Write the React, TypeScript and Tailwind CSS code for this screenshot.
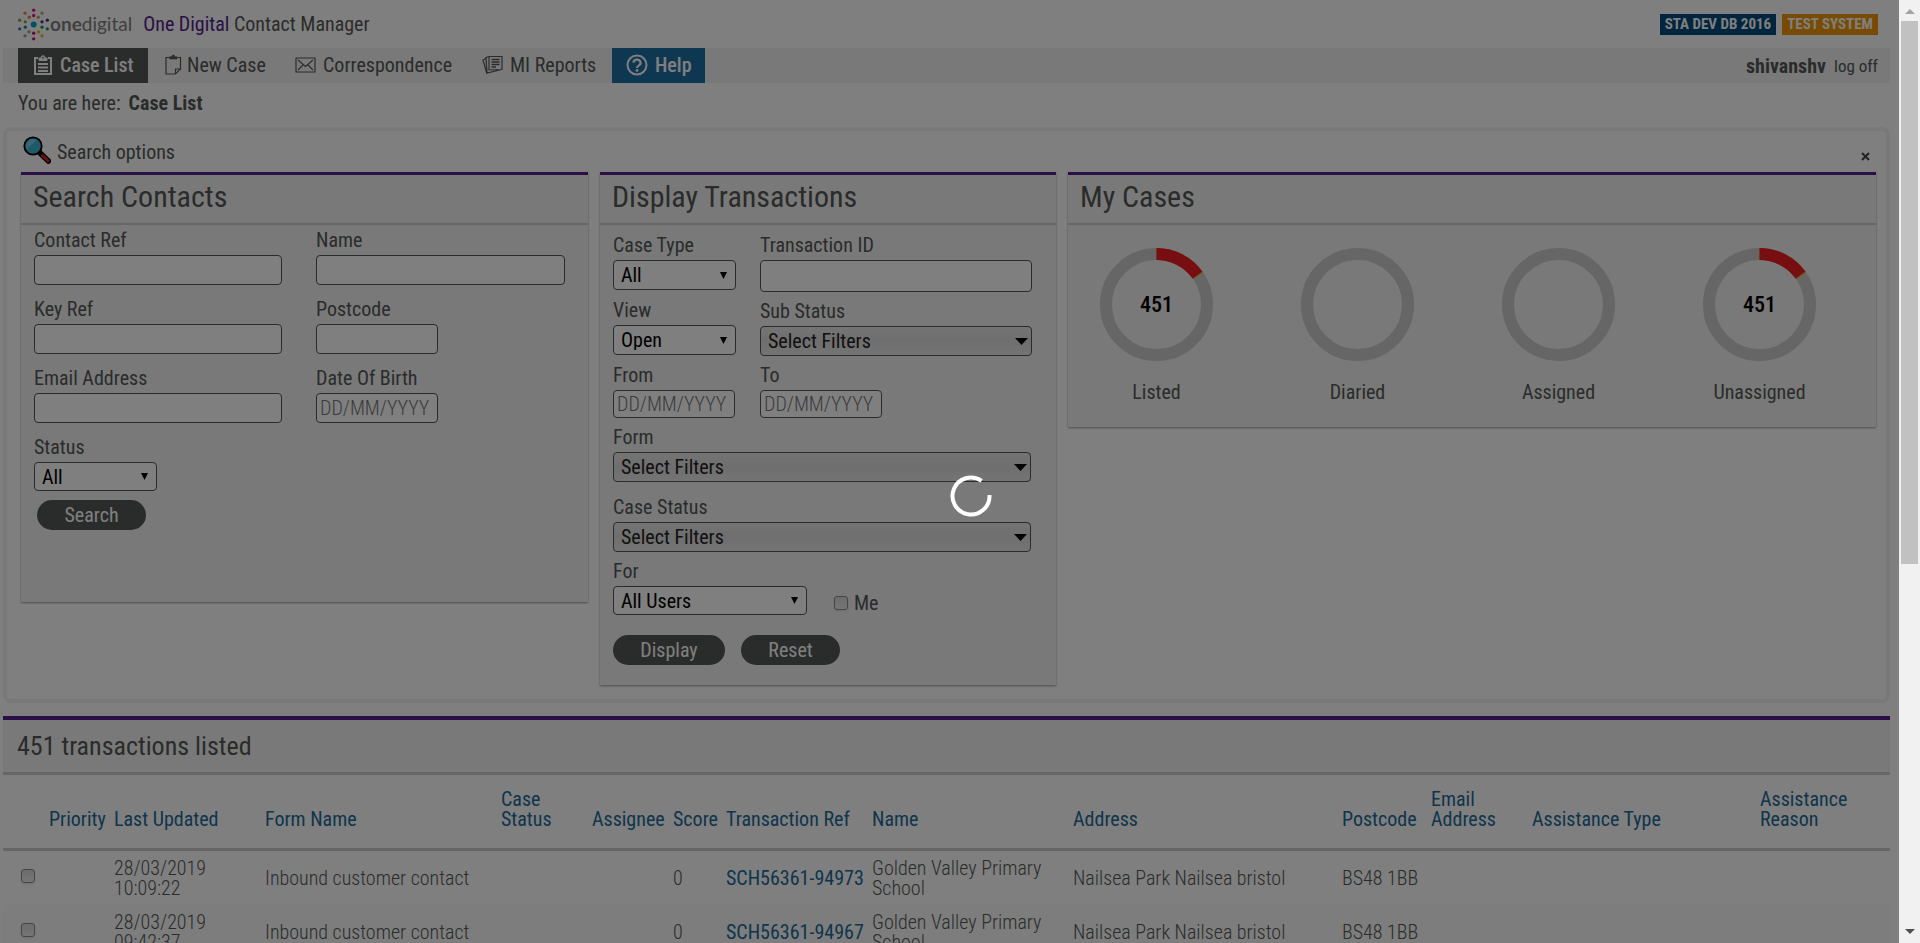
import React from 'react';

const LOGO_DOTS: [number, number, number, string][] = [
  [101, 75, 9, '#00a3c7'],
  [101, 32, 5, '#e5127d'], [101, 48, 5, '#e5127d'],
  [101, 101, 5, '#c4126b'], [101, 118, 5, '#c4126b'],
  [75, 41, 5, '#f0803c'], [88, 53, 5, '#f0803c'],
  [126, 41, 5, '#bfa67a'], [115, 53, 5, '#bfa67a'],
  [59, 62, 5, '#6cb33f'], [76, 67, 5, '#6cb33f'],
  [142, 62, 5, '#5b2d90'], [126, 67, 5, '#5b2d90'],
  [59, 88, 5, '#4a6fb5'], [76, 83, 5, '#4a6fb5'],
  [142, 88, 5, '#0f9d6b'], [126, 83, 5, '#0f9d6b'],
  [75, 109, 5, '#9a9a9a'], [87, 97, 5, '#9a9a9a'],
  [126, 109, 5, '#eeb11c'], [116, 97, 5, '#eeb11c'],
];

function Logo() {
  return (
    <a href="#" className="flex h-[33px] items-center font-['Lato',sans-serif] text-[19px] leading-5 text-[#808080]">
      <svg viewBox="54 26 96 98" className="h-[33px] w-8" aria-hidden="true">
        {LOGO_DOTS.map(([x, y, r, c], i) => <circle key={i} cx={x} cy={y} r={r} fill={c} />)}
      </svg>
      <span><b>one</b>digital</span>
    </a>
  );
}

function ClipboardIcon() {
  return (
    <svg viewBox="0 0 20 22" className="h-[22px] w-5" fill="none" stroke="currentColor" aria-hidden="true">
      <path d="M5 4H2v16h16V4h-3" strokeWidth="2" />
      <path d="M6 6.500V4h2a2 2.300 0 0 1 4 0h2v2.500z" fill="currentColor" strokeWidth="1" />
      <circle cx="10" cy="3.600" r=".9" fill="#545856" stroke="none" />
      <path d="M5 10h10M5 13.500h10M5 17h10" strokeWidth="2" />
    </svg>
  );
}

function NewCaseIcon() {
  return (
    <svg viewBox="0 0 17 22" className="h-[22px] w-[17px]" fill="none" stroke="currentColor" strokeWidth="1.200" aria-hidden="true">
      <path d="M4 3.500H1v16.500h9.500l5-5V3.500h-3M10.500 20v-5h5" />
      <path d="M4.500 5V2.800h2.300a1.500 1.800 0 0 1 3 0h2.300V5z" fill="currentColor" strokeWidth=".6" />
    </svg>
  );
}

function MailIcon() {
  return (
    <svg viewBox="0 0 21 16" className="h-4 w-[21px]" fill="none" stroke="currentColor" strokeWidth="1.200" aria-hidden="true">
      <path d="M1 1h19v14H1zM3 3l7.500 6.500L18 3M3 13l5-5M18 13l-5-5" />
    </svg>
  );
}

function ReportsIcon() {
  return (
    <svg viewBox="0 0 21 20" className="h-5 w-[21px]" fill="none" stroke="currentColor" strokeWidth="1.200" aria-hidden="true">
      <path d="M7 1.500h13v13L7 15zM7 1.500L4 2.500l1 15.500L20 14.500M4 3.500L1 5l4 14" />
      <path d="M9.500 4.500h8M9.500 7h8M9.500 9.500h8M9.500 12h4.500" strokeWidth="1.400" />
    </svg>
  );
}

function HelpIcon() {
  return (
    <svg viewBox="0 0 22 22" className="h-[22px] w-[22px]" fill="none" stroke="currentColor" strokeWidth="2" aria-hidden="true">
      <circle cx="11" cy="11" r="9.500" />
      <path d="M7.500 8.800a3.500 3.200 0 1 1 5.200 2.800c-1.200.7-1.700 1.200-1.700 2.400" strokeWidth="2.200" />
      <circle cx="11" cy="16.500" r="1.400" fill="currentColor" stroke="none" />
    </svg>
  );
}

function MagnifierIcon() {
  return (
    <svg viewBox="0 0 28 28" className="h-7 w-7" aria-hidden="true">
      <path d="M16 16l9.300 9" stroke="#000" strokeWidth="5.500" strokeLinecap="round" />
      <path d="M19.500 19.500l5.500 5.300" stroke="#d4212c" strokeWidth="3" strokeLinecap="round" />
      <circle cx="10" cy="10" r="8.700" fill="#3cb4d2" stroke="#000" strokeWidth="1.800" />
      <path d="M4 13.500L13.500 4a7 7 0 0 0-9.500 9.500z" fill="#6fd0e6" />
    </svg>
  );
}

const box = 'rounded border border-[#545856] bg-white';

function Field({ id, label, className = '', children }: { id: string; label: string; className?: string; children: React.ReactNode }) {
  return (
    <div className={className}>
      <label htmlFor={id} className="mb-[5px] block text-[20px] leading-5">{label}</label>
      {children}
    </div>
  );
}

function TextBox({ id, className, placeholder }: { id: string; className: string; placeholder?: string }) {
  return (
    <input
      id={id}
      type="text"
      placeholder={placeholder}
      className={`block px-[3px] text-[20px] font-light leading-5 text-black placeholder:text-[#757575] ${box} ${className}`}
    />
  );
}

function Select({ id, value, className }: { id: string; value: string; className: string }) {
  return (
    <div className={`grid items-center ${className}`}>
      <select id={id} className={`col-start-1 row-start-1 h-full w-full appearance-none pl-[7px] text-[20px] leading-5 text-black ${box}`}>
        <option>{value}</option>
      </select>
      <svg viewBox="0 0 7 7" className="pointer-events-none col-start-1 row-start-1 mr-[9px] h-[7px] w-[7px] justify-self-end" aria-hidden="true">
        <path d="M0 0h7L3.500 7z" />
      </svg>
    </div>
  );
}

function FilterSelect({ id }: { id: string }) {
  return (
    <div className="grid h-[30px] items-center">
      <select
        id={id}
        className="col-start-1 row-start-1 h-full w-full appearance-none rounded border border-[#545856] bg-linear-to-b from-[#e9e9e9] via-[#dedede] to-[#e9e9e9] pl-[7px] text-[20px] leading-5 text-[#222]"
      >
        <option>Select Filters</option>
      </select>
      <svg viewBox="0 0 13 7" className="pointer-events-none col-start-1 row-start-1 mr-1 h-[7px] w-[13px] justify-self-end" aria-hidden="true">
        <path d="M0 0h13L6.500 7z" />
      </svg>
    </div>
  );
}

const checkbox =
  'block h-3.5 w-3.5 shrink-0 appearance-none rounded-[3px] border border-[#8c8c8c] bg-linear-to-b from-[#d8d8d8] to-[#ececec] shadow-sm';

function Pill({ children, className }: { children: React.ReactNode; className: string }) {
  return (
    <button type="button" className={`h-[30px] rounded-[15px] bg-[#545856] text-[20px] leading-5 text-white ${className}`}>
      {children}
    </button>
  );
}

function Panel({ title, children }: { title: string; children: React.ReactNode }) {
  return (
    <section className="border-t-[3px] border-[#52228a] bg-[#f3f3f3] shadow-[0_1px_2px_rgba(0,0,0,0.4)]">
      <h2 className="h-[50px] border-b-2 border-[#cccccc] px-3 text-[30px] leading-[44px]">{title}</h2>
      {children}
    </section>
  );
}

function Ring({ label, value }: { label: string; value?: number }) {
  return (
    <div className="flex w-[113px] flex-col items-center">
      <svg viewBox="0 0 113 113" className="h-[113px] w-[113px]" role="img" aria-label={label}>
        <circle cx="56.500" cy="56.500" r="50.500" fill="none" stroke="#cccccc" strokeWidth="12" />
        {value !== undefined && (
          <>
            <path d="M56.500 6a50.500 50.500 0 0 1 41.600 21.900" fill="none" stroke="#f0aa28" strokeWidth="12" />
            <path d="M56.500 6a50.500 50.500 0 0 1 41 21" fill="none" stroke="#ee1c25" strokeWidth="12" />
            <text x="56.500" y="64" textAnchor="middle" fontSize="22" fontWeight="500">{value}</text>
          </>
        )}
      </svg>
      <span className="mt-[21px] text-[20px] leading-5">{label}</span>
    </div>
  );
}

const COLUMNS: { label: string; width: string }[] = [
  { label: 'Priority', width: 'w-[65px]' },
  { label: 'Last Updated', width: 'w-[151px]' },
  { label: 'Form Name', width: 'w-[236px]' },
  { label: 'Case Status', width: 'w-[91px] pr-6' },
  { label: 'Assignee', width: 'w-[81px]' },
  { label: 'Score', width: 'w-[53px]' },
  { label: 'Transaction Ref', width: 'w-[146px]' },
  { label: 'Name', width: 'w-[201px]' },
  { label: 'Address', width: 'w-[269px]' },
  { label: 'Postcode', width: 'w-[89px]' },
  { label: 'Email Address', width: 'w-[101px] pr-6' },
  { label: 'Assistance Type', width: 'w-[228px]' },
  { label: 'Assistance Reason', width: 'pr-6' },
];

const ROWS = [
  { date: '28/03/2019', time: '10:09:22', ref: 'SCH56361-94973' },
  { date: '28/03/2019', time: '09:42:37', ref: 'SCH56361-94967' },
];

const navLink = 'flex items-center text-[20px] leading-5';

export default function App() {
  return (
    <div className="flex h-screen overflow-hidden bg-white font-['Roboto_Condensed','Roboto',sans-serif] text-[20px] leading-5 text-[#545856]">
      <div className="relative min-w-0 flex-1 overflow-hidden">
        <header className="flex h-12 items-center pl-[18px] pr-[21px]">
          <Logo />
          <h1 className="ml-[11px] text-[20px] leading-5"><span className="text-[#52228a]">One Digital</span> Contact Manager</h1>
          <div className="ml-auto flex gap-1.5 text-[15px] font-bold leading-[21px] text-white">
            <span className="bg-[#004b7d] px-[5px]">STA DEV DB 2016</span>
            <span className="bg-[#f09600] px-[5px]">TEST SYSTEM</span>
          </div>
        </header>

        <nav className="ml-[3px] mr-[9px] flex h-[35px] bg-[#f3f3f3] pl-[15px] pr-3">
          <a href="#" className={`${navLink} w-[130px] gap-[7px] bg-[#545856] pb-0.5 pl-[15px] font-medium text-white`}><ClipboardIcon />Case List</a>
          <a href="#" className={`${navLink} ml-[17px] w-[113px] gap-[5px] pb-0.5`}><NewCaseIcon />New Case</a>
          <a href="#" className={`${navLink} ml-[17px] w-[170px] gap-[7px] pb-0.5`}><MailIcon />Correspondence</a>
          <a href="#" className={`${navLink} ml-[17px] w-[130px] gap-[7px] pb-0.5`}><ReportsIcon />MI Reports</a>
          <a href="#" className={`${navLink} w-[93px] gap-[7px] bg-[#1c70a2] pb-0.5 pl-3.5 font-medium text-white`}><HelpIcon />Help</a>
          <div className="ml-auto flex items-center gap-2">
            <b>shivanshv</b>
            <a href="#" className="text-[17px]">log off</a>
          </div>
        </nav>

        <p className="mb-1 flex h-10 items-center gap-2 pl-[18px]">You are here: <b>Case List</b></p>

        <main className="ml-[3px] mr-[9px]">
          <div className="rounded-lg border-4 border-[#f3f3f3] pb-3.5 pl-3.5 pr-2.5">
            <div className="flex h-[41px] items-center">
              <div className="mb-1 ml-0.5"><MagnifierIcon /></div>
              <span className="ml-1.5">Search options</span>
              <button type="button" aria-label="Close" className="ml-auto mr-1.5 mt-2.5">
                <svg viewBox="0 0 9 9" className="h-[9px] w-[9px]" stroke="#444" strokeWidth="2" aria-hidden="true"><path d="M1 1l7 7M8 1L1 8" /></svg>
              </button>
            </div>

            <div className="grid grid-cols-[567fr_456fr_808fr] items-start gap-3">
              <Panel title="Search Contacts">
                <form className="px-[13px] pb-[72px] pt-[5px]">
                  <div className="grid grid-cols-[248px_249px] gap-x-[34px] gap-y-3.5">
                    <Field id="contact-ref" label="Contact Ref"><TextBox id="contact-ref" className="h-[30px] w-full" /></Field>
                    <Field id="name" label="Name"><TextBox id="name" className="h-[30px] w-full" /></Field>
                    <Field id="key-ref" label="Key Ref"><TextBox id="key-ref" className="h-[30px] w-full" /></Field>
                    <Field id="postcode" label="Postcode"><TextBox id="postcode" className="h-[30px] w-[122px]" /></Field>
                    <Field id="email" label="Email Address"><TextBox id="email" className="h-[30px] w-full" /></Field>
                    <Field id="dob" label="Date Of Birth"><TextBox id="dob" placeholder="DD/MM/YYYY" className="h-[30px] w-[122px]" /></Field>
                    <Field id="status" label="Status"><Select id="status" value="All" className="h-[29px] w-[123px]" /></Field>
                  </div>
                  <Pill className="ml-[3px] mt-[9px] w-[109px]">Search</Pill>
                </form>
              </Panel>

              <Panel title="Display Transactions">
                <form className="px-[13px] pb-5 pt-2.5">
                  <div className="flex gap-6">
                    <div className="flex w-[123px] flex-col gap-2.5">
                      <Field id="case-type" label="Case Type"><Select id="case-type" value="All" className="h-[30px]" /></Field>
                      <Field id="view" label="View"><Select id="view" value="Open" className="h-[30px]" /></Field>
                      <Field id="from" label="From"><TextBox id="from" placeholder="DD/MM/YYYY" className="h-7 w-[122px]" /></Field>
                    </div>
                    <div className="flex w-[272px] flex-col gap-[9px]">
                      <Field id="transaction-id" label="Transaction ID"><TextBox id="transaction-id" className="h-8 w-full" /></Field>
                      <Field id="sub-status" label="Sub Status"><FilterSelect id="sub-status" /></Field>
                      <Field id="to" label="To"><TextBox id="to" placeholder="DD/MM/YYYY" className="h-7 w-[122px]" /></Field>
                    </div>
                  </div>
                  <Field id="form" label="Form" className="mt-[9px] w-[418px]"><FilterSelect id="form" /></Field>
                  <Field id="case-status" label="Case Status" className="mt-[15px] w-[418px]"><FilterSelect id="case-status" /></Field>
                  <div className="mt-[9px] flex items-end">
                    <Field id="for" label="For"><Select id="for" value="All Users" className="h-[29px] w-[194px]" /></Field>
                    <label className="ml-[27px] flex h-[25px] items-center gap-1.5"><input type="checkbox" className={checkbox} />Me</label>
                  </div>
                  <div className="mt-5 flex gap-4">
                    <Pill className="w-28">Display</Pill>
                    <Pill className="w-[99px]">Reset</Pill>
                  </div>
                </form>
              </Panel>

              <Panel title="My Cases">
                <div className="flex justify-between pb-[25px] pl-8 pr-[60px] pt-[23px]">
                  <Ring label="Listed" value={451} />
                  <Ring label="Diaried" />
                  <Ring label="Assigned" />
                  <Ring label="Unassigned" value={451} />
                </div>
              </Panel>
            </div>
          </div>

          <section className="mt-[13px] border-t-4 border-[#52228a]">
            <h2 className="h-[55px] border-b-[3px] border-[#cccccc] bg-[#f3f3f3] pl-3.5 text-[26px] leading-[52px]">451 transactions listed</h2>
            <table className="w-full table-fixed border-separate border-spacing-0 text-left">
              <thead>
                <tr className="h-[76px] align-bottom text-[#206a98]">
                  <th className="w-[46px] border-b-[3px] border-[#cccccc]" aria-label="Select" />
                  {COLUMNS.map((c) => (
                    <th key={c.label} className={`border-b-[3px] border-[#cccccc] pb-[19px] font-normal ${c.width}`}><a href="#">{c.label}</a></th>
                  ))}
                </tr>
              </thead>
              <tbody>
                {ROWS.map((r) => (
                  <tr key={r.ref} className="h-[54px] font-light even:bg-[#fbfbfb]">
                    <td className="pb-1 pl-[18px]"><input type="checkbox" aria-label={r.ref} className={checkbox} /></td>
                    <td />
                    <td>{r.date}<br />{r.time}</td>
                    <td>Inbound customer contact</td>
                    <td />
                    <td />
                    <td>0</td>
                    <td className="font-normal"><a href="#" className="text-[#206a98]">{r.ref}</a></td>
                    <td className="pr-5">Golden Valley Primary School</td>
                    <td>Nailsea Park Nailsea bristol</td>
                    <td>BS48 1BB</td>
                    <td />
                    <td />
                    <td />
                  </tr>
                ))}
              </tbody>
            </table>
          </section>
        </main>

        <div className="absolute inset-0 flex items-center justify-center bg-black/50 pl-[42px] pt-12" role="status" aria-label="Loading">
          <svg viewBox="-21 -21 42 42" className="h-[42px] w-[42px]" fill="none" stroke="#fff" strokeWidth="4" aria-hidden="true">
            <path d="M18.500-1A18.500 18.500 0 1 1 10.600-15.200" />
          </svg>
        </div>
      </div>

      <div className="flex w-[21px] flex-col items-center bg-[#f1f1f1]" aria-hidden="true">
        <svg viewBox="0 0 10 5" className="mb-[7px] mt-[9px] h-[5px] w-2.5" fill="#a3a3a3"><path d="M0 5L5 0l5 5z" /></svg>
        <div className="h-[543px] w-[17px] bg-[#c1c1c1]" />
        <svg viewBox="0 0 10 5" className="mb-[9px] mt-auto h-[5px] w-2.5" fill="#505050"><path d="M0 0l5 5 5-5z" /></svg>
      </div>
    </div>
  );
}
